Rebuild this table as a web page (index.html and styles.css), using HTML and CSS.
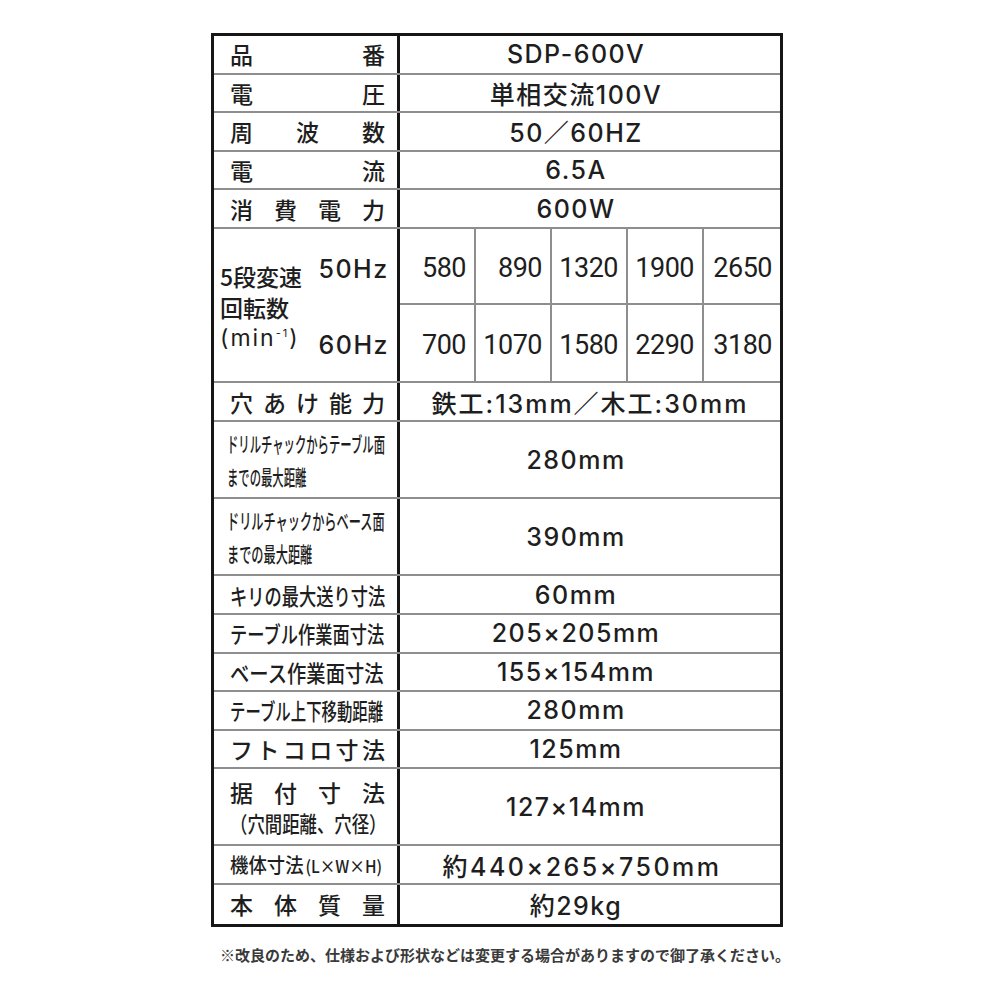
FILE: index.html
```html
<!DOCTYPE html>
<html lang="ja">
<head>
<meta charset="utf-8">
<title>SDP-600V 仕様</title>
<link rel="stylesheet" href="styles.css">
</head>
<body>
<div class="sheet">
  <div class="spec">
    <div class="row"><div class="lab spread"><span>品</span><span>番</span></div><div class="val">SDP-600V</div></div>
    <div class="row"><div class="lab spread"><span>電</span><span>圧</span></div><div class="val">単相交流100V</div></div>
    <div class="row"><div class="lab spread"><span>周</span><span>波</span><span>数</span></div><div class="val">50／60HZ</div></div>
    <div class="row"><div class="lab spread"><span>電</span><span>流</span></div><div class="val">6.5A</div></div>
    <div class="row"><div class="lab spread"><span>消</span><span>費</span><span>電</span><span>力</span></div><div class="val">600W</div></div>
    <div class="row rpm">
      <div class="lab rpmlab">
        <div class="rpmname"><div>5段変速</div><div>回転数</div><div class="minunit">(min<sup>-1</sup>)</div></div>
        <div class="hz"><div>50Hz</div><div>60Hz</div></div>
      </div>
      <div class="speeds">
        <div class="sp">580</div><div class="sp">890</div><div class="sp">1320</div><div class="sp">1900</div><div class="sp">2650</div>
        <div class="sp">700</div><div class="sp">1070</div><div class="sp">1580</div><div class="sp">2290</div><div class="sp">3180</div>
      </div>
    </div>
    <div class="row"><div class="lab spread"><span>穴</span><span>あ</span><span>け</span><span>能</span><span>力</span></div><div class="val wide">鉄工:13mm／木工:30mm</div></div>
    <div class="row h2"><div class="lab col drill"><span class="fit k54">ドリルチャックからテーブル面</span><span class="fit k54">までの最大距離</span></div><div class="val">280mm</div></div>
    <div class="row h2"><div class="lab col drill"><span class="fit k58">ドリルチャックからベース面</span><span class="fit k58">までの最大距離</span></div><div class="val">390mm</div></div>
    <div class="row"><div class="lab"><span class="fit k75">キリの最大送り寸法</span></div><div class="val">60mm</div></div>
    <div class="row"><div class="lab"><span class="fit k75">テーブル作業面寸法</span></div><div class="val">205×205mm</div></div>
    <div class="row"><div class="lab"><span class="fit k84">ベース作業面寸法</span></div><div class="val">155×154mm</div></div>
    <div class="row"><div class="lab"><span class="fit k67">テーブル上下移動距離</span></div><div class="val">280mm</div></div>
    <div class="row"><div class="lab spread"><span>フ</span><span>ト</span><span>コ</span><span>ロ</span><span>寸</span><span>法</span></div><div class="val">125mm</div></div>
    <div class="row h2">
      <div class="lab col mount">
        <div class="spreadline"><span>据</span><span>付</span><span>寸</span><span>法</span></div>
        <span class="fit k79 sub">（穴間距離、穴径）</span>
      </div>
      <div class="val">127×14mm</div>
    </div>
    <div class="row"><div class="lab"><span class="fit k92 body">機体寸法<span class="lwh">(L×W×H)</span></span></div><div class="val dims">約440×265×750mm</div></div>
    <div class="row"><div class="lab spread"><span>本</span><span>体</span><span>質</span><span>量</span></div><div class="val">約29kg</div></div>
  </div>
  <p class="note">※改良のため、仕様および形状などは変更する場合がありますので御了承ください。</p>
</div>
</body>
</html>
```

FILE: styles.css
```css
html, body {
  margin: 0;
  padding: 0;
  background: #ffffff;
}

body {
  font-family: "Noto Sans CJK JP", "Noto Sans", sans-serif;
  color: #1e1e1e;
}

.sheet {
  padding: 33px 0 0 211px;
}

.spec {
  width: 572px;
  box-sizing: border-box;
  border: 3px solid #161616;
}

.row {
  display: grid;
  grid-template-columns: 186px 1fr;
  height: 38.6px;
  box-sizing: border-box;
  border-bottom: 2px solid #8e8e8e;
}

.row:last-child {
  border-bottom: 0;
}

.row.h2 {
  height: 77.2px;
}

.row.rpm {
  height: 154.4px;
}

.lab {
  box-sizing: border-box;
  border-right: 3px solid #161616;
  padding: 0 12px 0 16px;
  display: flex;
  align-items: center;
  font-size: 23px;
  font-weight: 500;
  min-width: 0;
  white-space: nowrap;
}

.lab.spread {
  justify-content: space-between;
}

.lab.col {
  flex-direction: column;
  align-items: flex-start;
  justify-content: center;
}

.fit {
  display: inline-block;
  flex-shrink: 0;
  white-space: nowrap;
  transform-origin: 0 50%;
}

.k54 { transform: scaleX(0.54); }
.k58 { transform: scaleX(0.58); }
.k67 { transform: scaleX(0.67); }
.k75 { transform: scaleX(0.75); }
.k79 { transform: scaleX(0.79); }
.k84 { transform: scaleX(0.84); }
.k92 { transform: scaleX(0.92); }

.drill {
  padding-left: 13px;
  font-size: 21px;
  line-height: 33px;
}

.mount {
  line-height: 30px;
}

.spreadline {
  align-self: stretch;
  display: flex;
  justify-content: space-between;
}

.sub {
  font-size: 22px;
}

.body {
  font-size: 20px;
}

.lwh {
  font-size: 17px;
  margin-left: 2px;
}

.val {
  display: flex;
  align-items: center;
  justify-content: center;
  padding-right: 28px;
  font-family: "Inter", "Noto Sans CJK JP", sans-serif;
  font-size: 25px;
  font-weight: 500;
  letter-spacing: 1.5px;
  white-space: nowrap;
}

.val.wide {
  padding-right: 0;
  letter-spacing: 2px;
}

.val.dims {
  letter-spacing: 2.5px;
  padding-right: 16px;
}

.rpmlab {
  padding: 0 8px 0 6px;
  justify-content: space-between;
  align-items: stretch;
}

.rpmname {
  display: flex;
  flex-direction: column;
  justify-content: center;
  line-height: 31px;
  padding-top: 4px;
}

.minunit {
  font-family: "Inter", sans-serif;
  font-size: 23px;
  font-weight: 400;
  letter-spacing: 2px;
}

.minunit sup {
  font-size: 11px;
  vertical-align: 9px;
  line-height: 0;
}

.hz {
  display: flex;
  flex-direction: column;
  font-family: "Inter", sans-serif;
  font-size: 25px;
  font-weight: 500;
  letter-spacing: 1.5px;
}

.hz div {
  flex: 1;
  display: flex;
  align-items: center;
  padding-top: 3px;
}

.speeds {
  display: grid;
  grid-template-columns: repeat(5, 1fr);
  grid-template-rows: 1fr 1fr;
}

.sp {
  display: flex;
  align-items: center;
  justify-content: flex-end;
  padding: 4px 8px 0 0;
  border-right: 2px solid #8e8e8e;
  font-family: "Roboto", sans-serif;
  font-size: 27px;
  letter-spacing: -0.5px;
}

.sp:nth-child(5n) {
  border-right: 0;
}

.sp:nth-child(-n+5) {
  border-bottom: 2px solid #8e8e8e;
}

.note {
  margin: 17px 0 0 9px;
  font-size: 15px;
  font-weight: 700;
  color: #3a3a3a;
  white-space: nowrap;
  letter-spacing: 0;
}
```
